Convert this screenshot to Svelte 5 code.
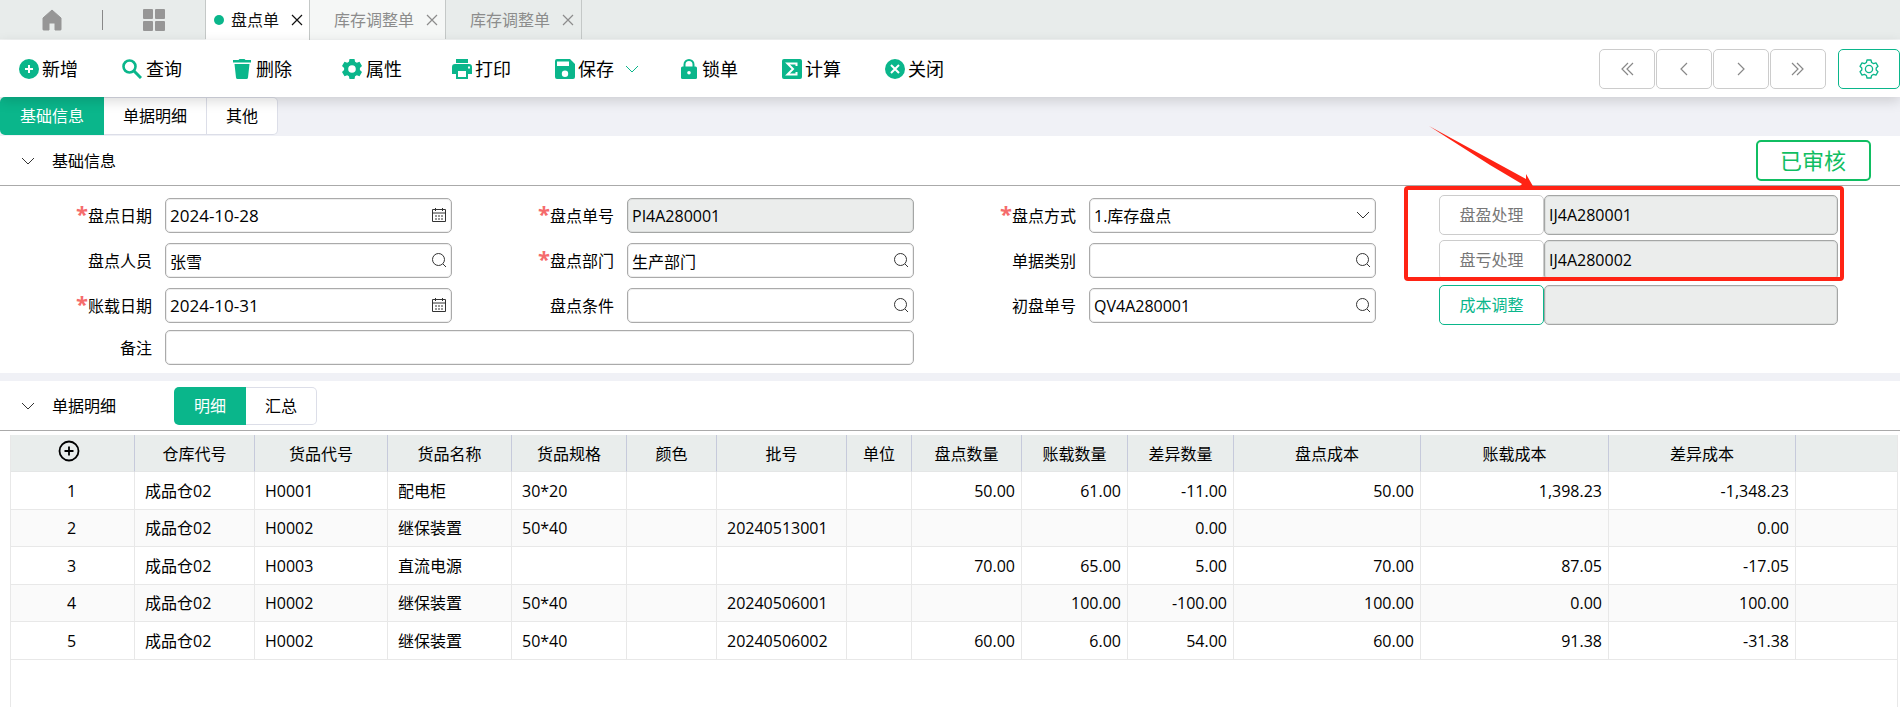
<script>
    let activePage = $state(0);
    let activeSection = $state('基础信息');
    let activeDetail = $state('明细');
    let baseOpen = $state(true);
    let detailOpen = $state(true);

    const pages = ['盘点单', '库存调整单', '库存调整单'];
    const sections = ['基础信息', '单据明细', '其他'];

    const actions = [
        { icon: 'add', text: '新增' },
        { icon: 'search', text: '查询', wide: true },
        { icon: 'trash', text: '删除', wide: true },
        { icon: 'gear', text: '属性', wide: true },
        { icon: 'print', text: '打印' },
        { icon: 'save', text: '保存', menu: true },
        { icon: 'lock', text: '锁单' },
        { icon: 'sum', text: '计算' },
        { icon: 'close', text: '关闭' }
    ];

    const pagers = [
        { name: '首张', paths: ['M10 3 4 9l6 6', 'M15 3 9 9l6 6'] },
        { name: '上一张', paths: ['M12 3 6 9l6 6'] },
        { name: '下一张', paths: ['M6 3l6 6-6 6'] },
        { name: '末张', paths: ['M3 3l6 6-6 6', 'M8 3l6 6-6 6'] }
    ];

    // three fields and one linked document per line
    const formRows = [
        {
            fields: [
                { id: 'pdDate', label: '盘点日期', value: '2024-10-28', required: true, kind: 'date' },
                { id: 'pdNo', label: '盘点单号', value: 'PI4A280001', required: true, kind: 'readonly' },
                { id: 'pdType', label: '盘点方式', value: '1.库存盘点', required: true, kind: 'select' }
            ],
            link: { text: '盘盈处理', value: 'IJ4A280001' }
        },
        {
            fields: [
                { id: 'pdUser', label: '盘点人员', value: '张雪', kind: 'lookup' },
                { id: 'pdDept', label: '盘点部门', value: '生产部门', required: true, kind: 'lookup' },
                { id: 'billType', label: '单据类别', value: '', kind: 'lookup' }
            ],
            link: { text: '盘亏处理', value: 'IJ4A280002' }
        },
        {
            fields: [
                { id: 'bookDate', label: '账载日期', value: '2024-10-31', required: true, kind: 'date' },
                { id: 'pdCond', label: '盘点条件', value: '', kind: 'lookup' },
                { id: 'firstNo', label: '初盘单号', value: 'QV4A280001', kind: 'lookup' }
            ],
            link: { text: '成本调整', value: '', enabled: true }
        }
    ];

    const columns = [
        { title: '仓库代号', width: 120 },
        { title: '货品代号', width: 133 },
        { title: '货品名称', width: 124 },
        { title: '货品规格', width: 115 },
        { title: '颜色', width: 90 },
        { title: '批号', width: 130 },
        { title: '单位', width: 65 },
        { title: '盘点数量', width: 110, num: true },
        { title: '账载数量', width: 106, num: true },
        { title: '差异数量', width: 106, num: true },
        { title: '盘点成本', width: 187, num: true },
        { title: '账载成本', width: 188, num: true },
        { title: '差异成本', width: 187, num: true }
    ];

    const rows = [
        ['成品仓02', 'H0001', '配电柜', '30*20', '', '', '', '50.00', '61.00', '-11.00', '50.00', '1,398.23', '-1,348.23'],
        ['成品仓02', 'H0002', '继保装置', '50*40', '', '20240513001', '', '', '', '0.00', '', '', '0.00'],
        ['成品仓02', 'H0003', '直流电源', '', '', '', '', '70.00', '65.00', '5.00', '70.00', '87.05', '-17.05'],
        ['成品仓02', 'H0002', '继保装置', '50*40', '', '20240506001', '', '', '100.00', '-100.00', '100.00', '0.00', '100.00'],
        ['成品仓02', 'H0002', '继保装置', '50*40', '', '20240506002', '', '60.00', '6.00', '54.00', '60.00', '91.38', '-31.38']
    ];
</script>

{#snippet actionIcon(name)}
    <svg class="action-icon" viewBox="0 0 20 20" aria-hidden="true">
        {#if name === 'add'}
            <circle cx="10" cy="10" r="10" fill="currentColor" />
            <path d="M10 6v8M6 10h8" stroke="#fff" stroke-width="2" />
        {:else if name === 'search'}
            <circle cx="7.5" cy="7.5" r="6" fill="none" stroke="currentColor" stroke-width="2.6" />
            <path d="M11.8 11.8 19 19" stroke="currentColor" stroke-width="3" />
        {:else if name === 'trash'}
            <path d="M1 1h5.5l1-1h5l1 1H19v2.6H1zM2.5 5h15l-1.5 13.4q-.2 1.600-1.600 1.600H5.600q-1.400 0-1.600-1.600z" fill="currentColor" />
        {:else if name === 'gear'}
            <path fill="currentColor" fill-rule="evenodd" d="M7.500 0h5l.6 2.700 1.700 1 2.700-.9L20 7.100 17.900 9v2l2.100 1.900-2.500 4.300-2.700-.9-1.700 1-.6 2.700h-5l-.6-2.700-1.700-1-2.700.9L0 12.900 2.100 11V9L0 7.100l2.500-4.300 2.700.9 1.700-1zM10 6.200a3.800 3.800 0 1 0 0 7.600 3.800 3.800 0 0 0 0-7.600z" />
        {:else if name === 'print'}
            <path fill="currentColor" fill-rule="evenodd" d="M4 0h12v4H4zM3 5h14q3 0 3 3v7h-4v5H4v-5H0V8q0-3 3-3zm3 7v6h8v-6zm10-4.500v2h2v-2z" />
        {:else if name === 'save'}
            <path fill="currentColor" fill-rule="evenodd" d="M2 0h13l5 5v13q0 2-2 2H2q-2 0-2-2V2q0-2 2-2zm0 2.500V7h12V2.500zM10 11.500a3.200 3.200 0 1 0 0 6.400 3.200 3.200 0 0 0 0-6.400z" />
        {:else if name === 'lock'}
            <path d="M5.500 9V5.500a4.500 4.500 0 0 1 9 0V9" fill="none" stroke="currentColor" stroke-width="2" />
            <rect x="2" y="7.500" width="16" height="12.500" rx="1.500" fill="currentColor" />
            <circle cx="10" cy="13.700" r="1.800" fill="#fff" />
        {:else if name === 'sum'}
            <rect width="20" height="20" rx="2" fill="currentColor" />
            <path d="M14.500 7V4.500h-9l5.500 5.500-5.500 5.500h9V13" fill="none" stroke="#fff" stroke-width="2" />
        {:else if name === 'close'}
            <circle cx="10" cy="10" r="10" fill="currentColor" />
            <path d="M6 6l8 8M14 6l-8 8" stroke="#fff" stroke-width="2" />
        {/if}
    </svg>
{/snippet}

{#snippet chevron()}
    <svg class="chevron" viewBox="0 0 14 8" aria-hidden="true">
        <path d="M1 1l6 6 6-6" fill="none" stroke="currentColor" />
    </svg>
{/snippet}

{#snippet field(f)}
    <div class="field">
        <label for={f.id}>{#if f.required}<span class="star">*</span>{/if}{f.label}</label>
        <div class="control">
            {#if f.kind === 'select'}
                <select id={f.id}>
                    <option>{f.value}</option>
                </select>
                <span class="suffix">{@render chevron()}</span>
            {:else}
                <input
                    id={f.id}
                    type="text"
                    class:date={f.kind === 'date'}
                    readonly={f.kind === 'readonly'}
                    value={f.value}
                />
            {/if}
            {#if f.kind === 'date'}
                <button class="suffix" aria-label="选择日期">
                    <svg width="16" height="16" viewBox="0 0 16 16" fill="none" stroke="currentColor">
                        <path d="M1.500 2.500h13v12h-13zM1.500 6h13M4.500 1v3M11.500 1v3" />
                        <path d="M4 9h8M4 12h8" stroke-dasharray="2 1" />
                    </svg>
                </button>
            {:else if f.kind === 'lookup'}
                <button class="suffix" aria-label="查找">
                    <svg width="16" height="16" viewBox="0 0 16 16" fill="none" stroke="currentColor">
                        <circle cx="7.500" cy="7.500" r="6" />
                        <path d="M12 12l3 3" />
                    </svg>
                </button>
            {/if}
        </div>
    </div>
{/snippet}

<div class="app">
    <nav class="page-tabs">
        <div class="shortcuts">
            <button aria-label="首页">
                <svg width="20" height="22" viewBox="0 0 20 22">
                    <path d="M10 1 19 9v11.500q0 .5-.5.500H13v-7H7v7H1.500q-.5 0-.5-.5V9z" fill="#969696" stroke="#969696" stroke-linejoin="round" />
                </svg>
            </button>
            <span class="divider"></span>
            <button aria-label="应用">
                <svg width="22" height="22" viewBox="0 0 22 22" fill="#969696">
                    <rect width="10" height="10" rx="1" />
                    <rect x="12" width="10" height="10" rx="1" />
                    <rect y="12" width="10" height="10" rx="1" />
                    <rect x="12" y="12" width="10" height="10" rx="1" />
                </svg>
            </button>
        </div>
        {#each pages as page, i}
            <div class="page-tab" class:active={activePage === i} class:visited={i === 1}>
                {#if activePage === i}<span class="dot"></span>{/if}
                <button onclick={() => (activePage = i)}>{page}</button>
                <button class="tab-close" aria-label="关闭">
                    <svg width="12" height="12" viewBox="0 0 12 12">
                        <path d="M1 1l10 10M11 1 1 11" stroke="currentColor" stroke-width="1.200" />
                    </svg>
                </button>
            </div>
        {/each}
    </nav>

    <header class="toolbar">
        {#each actions as action}
            <button class="action" class:wide={action.wide} class:has-menu={action.menu}>
                {@render actionIcon(action.icon)}
                {action.text}
                {#if action.menu}<span class="menu">{@render chevron()}</span>{/if}
            </button>
        {/each}
        <div class="pager">
            {#each pagers as pager}
                <button aria-label={pager.name}>
                    <svg width="18" height="18" viewBox="0 0 18 18" fill="none" stroke="currentColor" stroke-width="1.200">
                        {#each pager.paths as d}<path {d} />{/each}
                    </svg>
                </button>
            {/each}
            <button class="settings" aria-label="设置">
                <svg width="20" height="20" viewBox="0 0 20 20" fill="none" stroke="currentColor" stroke-width="1.300" stroke-linejoin="round">
                    <path d="M8 1h4l.6 2.500 1.900 1.100 2.500-.7 2 3.400L17.200 9v2l1.800 1.700-2 3.400-2.500-.7-1.900 1.100L12 19H8l-.6-2.500-1.900-1.100-2.500.7-2-3.400L2.800 11V9L1 7.300l2-3.400 2.500.7 1.900-1.100z" />
                    <circle cx="10" cy="10" r="3.600" />
                </svg>
            </button>
        </div>
    </header>

    <div class="band">
        <div class="segmented">
            {#each sections as section}
                <button class:active={activeSection === section} onclick={() => (activeSection = section)}>{section}</button>
            {/each}
        </div>
    </div>

    <section>
        <div class="section-head">
            <button class="fold" aria-label="折叠" onclick={() => (baseOpen = !baseOpen)}>{@render chevron()}</button>
            <h2>基础信息</h2>
            <span class="stamp">已审核</span>
        </div>
        {#if baseOpen}
            <div class="form">
                {#each formRows as row, i}
                    {#each row.fields as f}
                        {@render field(f)}
                    {/each}
                    <div class="linked">
                        <button class:enabled={row.link.enabled}>{row.link.text}</button>
                        <input type="text" aria-label={row.link.text} readonly value={row.link.value} />
                        {#if i === 0}
                            <!-- marks the two generated adjustment documents -->
                            <div class="mark"></div>
                            <svg class="arrow" width="106" height="62" viewBox="0 0 106 62" aria-hidden="true">
                                <path d="M0 0 97 53V48l8 14-14-2 2-2-32-19z" fill="#ff2314" />
                            </svg>
                        {/if}
                    </div>
                {/each}
                <div class="field remark">
                    <label for="remark">备注</label>
                    <div class="control"><input id="remark" type="text" /></div>
                </div>
            </div>
        {/if}
    </section>

    <section class="detail">
        <div class="section-head">
            <button class="fold" aria-label="折叠" onclick={() => (detailOpen = !detailOpen)}>{@render chevron()}</button>
            <h2>单据明细</h2>
            <div class="segmented">
                {#each ['明细', '汇总'] as name}
                    <button class:active={activeDetail === name} onclick={() => (activeDetail = name)}>{name}</button>
                {/each}
            </div>
        </div>
        {#if detailOpen}
            <div class="grid">
                <table>
                    <colgroup>
                        <col style="width: 124px" />
                        {#each columns as col}<col style="width: {col.width}px" />{/each}
                        <col />
                    </colgroup>
                    <thead>
                        <tr>
                            <th class="index">
                                <button class="add-row" aria-label="新增行">
                                    <svg width="22" height="22" viewBox="0 0 22 22" fill="none" stroke="currentColor" stroke-width="1.800">
                                        <circle cx="11" cy="11" r="9.500" />
                                        <path d="M11 6.500v9M6.500 11h9" />
                                    </svg>
                                </button>
                            </th>
                            {#each columns as col}<th>{col.title}</th>{/each}
                            <th></th>
                        </tr>
                    </thead>
                    <tbody>
                        {#each rows as row, i}
                            <tr>
                                <td class="index">{i + 1}</td>
                                {#each row as cell, c}
                                    <td class:num={columns[c].num}>{cell}</td>
                                {/each}
                                <td></td>
                            </tr>
                        {/each}
                    </tbody>
                </table>
            </div>
        {/if}
    </section>
</div>

<style>
    :global(body) {
        margin: 0;
        background: #fff;
    }

    .app {
        display: flex;
        flex-direction: column;
        min-height: 100vh;
        font-family: 'Open Sans', 'Noto Sans CJK SC', sans-serif;
        font-size: 16px;
        font-weight: 370;
        line-height: 24px;
        color: #000;
    }

    .app * {
        box-sizing: border-box;
    }

    button,
    input,
    select {
        font: inherit;
        color: inherit;
    }

    button {
        padding: 0;
        border: 0;
        background: none;
        white-space: nowrap;
        cursor: pointer;
    }

    svg {
        display: block;
        flex: none;
    }

    /* open pages */
    .page-tabs {
        display: flex;
        height: 40px;
        background: #e8eceb;
        border-bottom: 1px solid #f3f5f5;
    }

    .shortcuts {
        display: flex;
        align-items: center;
        gap: 40px;
        width: 206px;
        padding-left: 42px;
        border-right: 1px solid #c4c8c7;
    }

    .divider {
        width: 1px;
        height: 20px;
        background: #888;
    }

    .page-tab {
        display: flex;
        align-items: center;
        padding: 0 7px 0 24px;
        border-right: 1px solid #c4c8c7;
        color: #8c8c8c;
    }

    .page-tab.visited {
        background: #f5f7f6;
    }

    .page-tab.active {
        height: 40px;
        padding: 0 6px 0 8px;
        background: #fff;
        color: #111;
    }

    .dot {
        width: 10px;
        height: 10px;
        margin-right: 7px;
        border-radius: 50%;
        background: #0ab68b;
    }

    .tab-close {
        margin-left: 12px;
    }

    /* toolbar */
    .toolbar {
        position: relative;
        z-index: 1;
        display: flex;
        align-items: center;
        gap: 40px;
        height: 57px;
        padding: 0 0 0 19px;
        background: #fff;
        box-shadow: 0 4px 12px rgba(0, 0, 0, 0.15);
    }

    .action {
        display: flex;
        align-items: center;
        gap: 3px;
        margin-right: 4px;
        font-size: 18px;
    }

    .action.wide {
        gap: 4px;
        margin-right: 10px;
    }

    .action.has-menu {
        margin-right: 0;
    }

    .action-icon {
        width: 20px;
        height: 20px;
        color: #0ab68b;
    }

    .menu {
        margin-left: 8px;
        color: #0ab68b;
    }

    .chevron {
        width: 14px;
        height: 8px;
    }

    .pager {
        display: flex;
        gap: 1px;
        margin-left: auto;
        color: #888;
    }

    .pager button {
        display: flex;
        align-items: center;
        justify-content: center;
        width: 56px;
        height: 40px;
        border: 1px solid #ccc;
        border-radius: 5px;
    }

    .pager .settings {
        width: 62px;
        margin-left: 11px;
        border-color: #0ab68b;
        color: #0ab68b;
    }

    .band {
        height: 39px;
        background: #f0f1f6;
    }

    .segmented {
        display: flex;
    }

    .segmented button {
        height: 38px;
        padding: 0 19px;
        border: 1px solid #dcdee8;
        border-left: 0;
        background: #fff;
    }

    .segmented button:first-child {
        border-radius: 5px 0 0 5px;
    }

    .segmented button:last-child {
        border-radius: 0 5px 5px 0;
    }

    .segmented button.active {
        padding: 0 20px;
        border: 0;
        background: #0ab68b;
        color: #fff;
    }

    /* sections */
    .section-head {
        display: flex;
        align-items: center;
        height: 50px;
        padding: 0 29px 0 21px;
        border-bottom: 1px solid #aaa;
    }

    .section-head h2 {
        margin: 0 58px 0 17px;
        font-size: 16px;
        font-weight: inherit;
    }

    .fold {
        color: #333;
    }

    .stamp {
        margin-left: auto;
        padding: 0 23px 0 22px;
        border: 2px solid #10be62;
        border-radius: 5px;
        font-size: 22px;
        line-height: 37px;
        color: #10be62;
    }

    .form {
        display: grid;
        grid-template-columns: repeat(4, 1fr);
        grid-template-rows: 45px 45px 45px 39px;
        padding: 7px 52px 6px 0;
    }

    .field {
        display: flex;
        align-items: center;
        padding-right: 10px;
    }

    .field label {
        flex: none;
        width: 165px;
        padding-right: 13px;
        text-align: right;
    }

    .star {
        font-size: 22px;
        font-weight: 700;
        line-height: 20px;
        color: #f56c6c;
    }

    .remark {
        grid-column: span 2;
    }

    .control {
        position: relative;
        flex: 1;
        min-width: 0;
    }

    input,
    select {
        display: block;
        width: 100%;
        height: 35px;
        padding: 0 4px;
        border: 1px solid #aaa;
        border-radius: 5px;
        background: #fff;
        box-shadow: inset 0 0 0 1px #eee;
        outline: none;
        appearance: none;
    }

    input:read-only {
        border-color: #a4a6a5;
        background: #ebedec;
        box-shadow: inset 0 0 0 1px #dcdedd;
    }

    input.date {
        font-size: 17px;
    }

    .suffix {
        position: absolute;
        top: 0;
        right: 5px;
        display: flex;
        align-items: center;
        height: 33px;
        color: #333;
    }

    select + .suffix {
        right: 6px;
        pointer-events: none;
    }

    .linked {
        position: relative;
        display: flex;
        align-items: center;
        padding: 0 10px 1px 53px;
    }

    .linked button {
        flex: none;
        width: 105px;
        height: 40px;
        border: 1px solid #ccc;
        border-radius: 5px;
        color: #777;
    }

    .linked button.enabled {
        border-color: #0ab68b;
        color: #0ab68b;
    }

    .linked input {
        flex: 1;
        min-width: 0;
        height: 40px;
    }

    .mark {
        position: absolute;
        z-index: 2;
        top: -7px;
        left: 18px;
        right: 4px;
        height: 95px;
        border: 4px solid #ff2314;
        border-radius: 4px;
        pointer-events: none;
    }

    .arrow {
        position: absolute;
        z-index: 2;
        top: -67px;
        left: 43px;
        pointer-events: none;
    }

    /* detail lines */
    .detail {
        display: flex;
        flex: 1;
        flex-direction: column;
        border-top: 8px solid #f0f1f6;
    }

    .grid {
        flex: 1;
        margin: 4px 2px 0 10px;
        border: solid #e8e8e8;
        border-width: 0 1px;
    }

    table {
        width: 100%;
        table-layout: fixed;
        border-spacing: 0;
    }

    th {
        height: 37px;
        padding: 2px 0 0;
        border-right: 1px solid #c6cadb;
        border-bottom: 1px solid #e4e6e6;
        background: #e9edec;
        font-weight: inherit;
    }

    th.index {
        padding: 0 8px 4px 0;
    }

    .add-row {
        display: block;
        margin: 0 auto;
    }

    td {
        height: 38px;
        padding: 0 10px;
        border-right: 1px solid #e8e8e8;
        border-bottom: 1px solid #e8e8e8;
        white-space: nowrap;
    }

    tbody tr:nth-child(even) td {
        height: 37px;
        background: #fafafa;
    }

    th:last-child,
    td:last-child {
        border-right: 0;
    }

    td.index {
        padding: 0 12px 0 10px;
        text-align: center;
    }

    td.num {
        padding: 0 6px;
        text-align: right;
    }
</style>
